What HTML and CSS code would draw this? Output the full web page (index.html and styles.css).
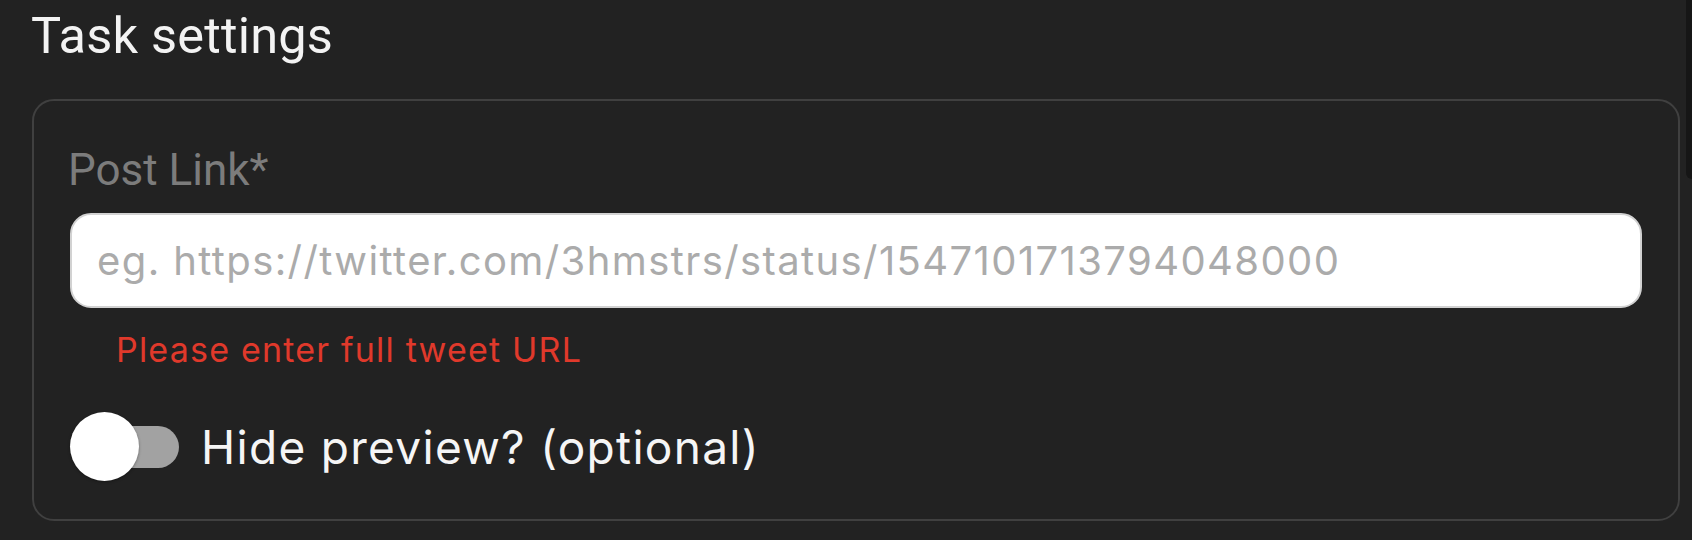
FILE: index.html
```html
<!DOCTYPE html>
<html lang="en">
<head>
<meta charset="utf-8">
<title>Task settings</title>
<link rel="stylesheet" href="styles.css">
</head>
<body>
<div class="scroll-edge"></div>
<main class="page">
  <h2 class="title">Task settings</h2>
  <section class="card">
    <label class="field-label" for="post-link">Post Link*</label>
    <input class="text-input" id="post-link" type="text" placeholder="eg. https://twitter.com/3hmstrs/status/1547101713794048000">
    <p class="error">Please enter full tweet URL</p>
    <div class="toggle-row">
      <span class="switch">
        <span class="track"></span>
        <span class="knob"></span>
      </span>
      <span class="toggle-label">Hide preview? (optional)</span>
    </div>
  </section>
</main>
</body>
</html>
```
FILE: styles.css
```css
html, body {
  margin: 0;
  padding: 0;
  background: #222222;
  height: 100%;
  overflow: hidden;
}

.page {
  padding: 8px 12px 0 32px;
}

.scroll-edge {
  position: fixed;
  top: 0;
  right: 0;
  width: 6px;
  height: 179px;
  background: #161616;
  border-bottom-left-radius: 6px;
}

.title {
  margin: 0;
  font-family: Roboto, "Liberation Sans", sans-serif;
  font-weight: 400;
  font-size: 50.5px;
  letter-spacing: 0.2px;
  line-height: 56px;
  color: #f3f3f3;
  margin-left: -1px;
}

.card {
  margin-top: 35px;
  border: 2px solid #404040;
  border-radius: 22px;
  padding: 44px 36px 38px 36px;
  display: flex;
  flex-direction: column;
  align-items: flex-start;
}

.field-label {
  font-family: Roboto, "Liberation Sans", sans-serif;
  font-size: 44px;
  line-height: 50px;
  color: #7c7c7c;
  margin-left: -2px;
}

.text-input {
  box-sizing: border-box;
  margin: 18px 0 0 0;
  width: 100%;
  height: 95px;
  border: 2px solid #d2d2d2;
  border-radius: 21px;
  background: #ffffff;
  padding: 0 0 0 25px;
  font-family: Inter, "Noto Sans", sans-serif;
  font-size: 40px;
  letter-spacing: 1.4px;
  color: #222;
  outline: none;
}

.text-input::placeholder {
  color: #ababab;
}

.error {
  margin: 22px 0 0 46px;
  font-family: Inter, "Noto Sans", sans-serif;
  font-size: 34px;
  letter-spacing: 1.2px;
  line-height: 40px;
  color: #e0392b;
}

.toggle-row {
  margin-top: 42px;
  display: flex;
  align-items: center;
  gap: 22px;
}

.switch {
  position: relative;
  display: flex;
  align-items: center;
  width: 109px;
  height: 69px;
}

.track {
  margin-left: 14px;
  width: 95px;
  height: 42px;
  border-radius: 21px;
  background: #a2a2a2;
}

.knob {
  position: absolute;
  left: 0;
  top: 0;
  width: 69px;
  height: 69px;
  border-radius: 50%;
  background: #ffffff;
  box-shadow: 0 1px 3px rgba(0, 0, 0, 0.35);
}

.toggle-label {
  font-family: Inter, "Noto Sans", sans-serif;
  font-size: 46px;
  letter-spacing: 1.3px;
  line-height: 54px;
  color: #f5f5f5;
}
```
